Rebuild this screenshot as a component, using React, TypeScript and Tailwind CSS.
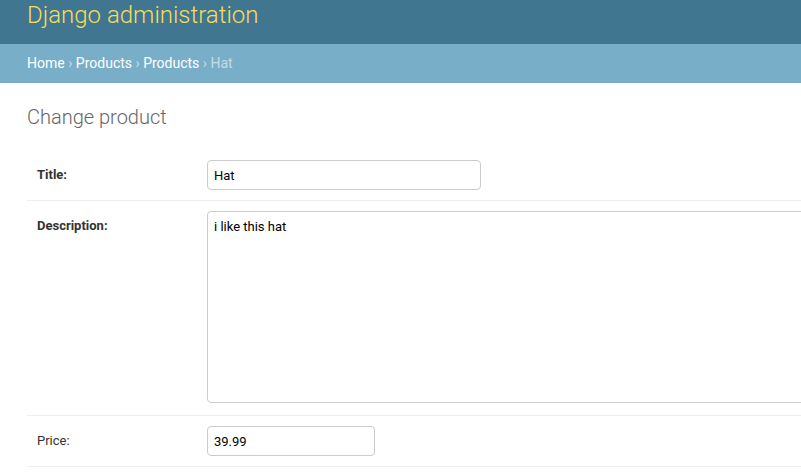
import React from 'react';

const Row = ({ label, bold, children, last }: { label: string; bold?: boolean; children: React.ReactNode; last?: string }) => {
  return (
    <div className={`flex items-start border-b border-[#eee] pt-[10px] ${last ?? 'pb-[10px]'}`}>
      <label className={`w-[180px] shrink-0 pl-[10px] text-[13px] leading-[30px] text-[#333] ${bold ? 'font-bold' : 'font-normal'}`}>
        {label}
      </label>
      {children}
    </div>
  );
};

const App = () => {
  return (
    <div className="min-h-screen w-full overflow-hidden bg-white font-['Roboto','Liberation_Sans',sans-serif]">
      <header className="h-[44px] bg-[#417690] pl-[27px]">
        <h1 className="text-[24px] font-light leading-[30px] text-[#f5dd5d]">Django administration</h1>
      </header>

      <nav className="flex h-[39px] items-center bg-[#79aec8] pl-[27px] text-[14px] text-[#c4dce8]">
        <a href="#" className="text-white">Home</a>
        <span>&nbsp;›&nbsp;</span>
        <a href="#" className="text-white">Products</a>
        <span>&nbsp;›&nbsp;</span>
        <a href="#" className="text-white">Products</a>
        <span>&nbsp;›&nbsp;</span>
        <span>Hat</span>
      </nav>

      <main className="pl-[27px]">
        <h1 className="mt-[22px] mb-[21px] text-[20px] font-light leading-[24px] text-[#666]">Change product</h1>

        <div className="w-[900px]">
          <Row label="Title:" bold>
            <input
              type="text"
              defaultValue="Hat"
              className="h-[30px] w-[274px] rounded-[4px] border border-[#ccc] px-[6px] text-[13px] text-black outline-none"
            />
          </Row>

          <Row label="Description:" bold last="pb-[12px]">
            <textarea
              defaultValue="i like this hat"
              className="block h-[192px] w-[638px] shrink-0 resize-none rounded-[4px] border border-[#ccc] px-[6px] pt-[7px] pb-[5px] text-[13px] leading-[16px] text-black outline-none"
            />
          </Row>

          <Row label="Price:">
            <input
              type="text"
              defaultValue="39.99"
              className="h-[30px] w-[168px] rounded-[4px] border border-[#ccc] px-[6px] text-[13px] text-black outline-none"
            />
          </Row>
        </div>
      </main>
    </div>
  );
};

export default App;
